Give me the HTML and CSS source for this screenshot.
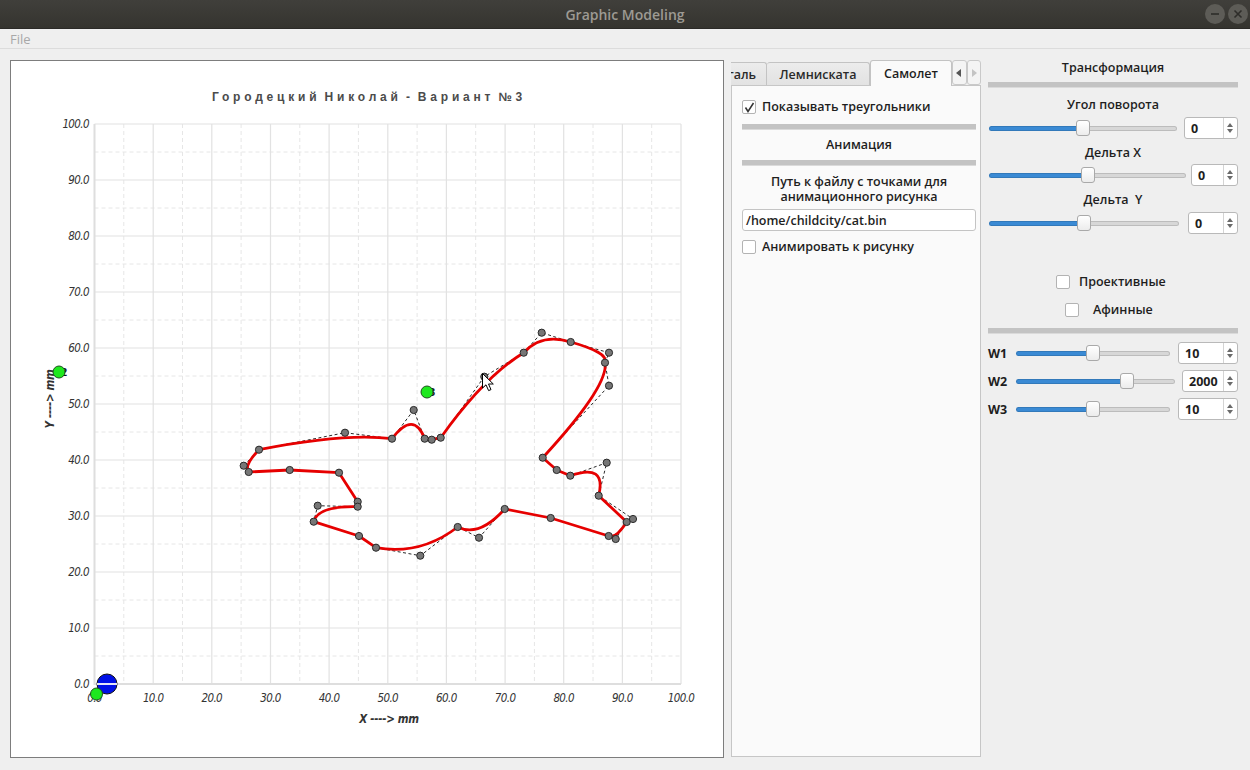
FILE: index.html
```html
<!DOCTYPE html>
<html lang="ru">
<head>
<meta charset="utf-8">
<title>Graphic Modeling</title>
<link rel="stylesheet" href="styles.css">
</head>
<body>
<div class="window">
  <header class="titlebar">
    <span></span>
    <span class="title">Graphic Modeling</span>
    <div class="wbtns">
      <span class="wbtn"><svg width="20" height="20" viewBox="0 0 20 20"><path d="M6 10H14" stroke="#2e2d2a" stroke-width="1.6"/></svg></span>
      <span class="wbtn"><svg width="20" height="20" viewBox="0 0 20 20"><path d="M6.5 6.5L13.5 13.5M13.5 6.5L6.5 13.5" stroke="#2e2d2a" stroke-width="1.6"/></svg></span>
    </div>
  </header>
  <nav class="menubar"><span class="menu-item">File</span></nav>

  <main class="main">
    <section class="chart">
      <svg class="plot" width="712" height="696" viewBox="11 61 712 696">
        <text class="ctitle" x="369" y="101" text-anchor="middle">Городецкий Николай - Вариант №3</text>
        <path class="minor" d="M123.8 124V684M182.5 124V684M241.1 124V684M299.8 124V684M358.4 124V684M417.1 124V684M475.7 124V684M534.4 124V684M593 124V684M651.7 124V684M94.5 656H681M94.5 600H681M94.5 544H681M94.5 488H681M94.5 432H681M94.5 376H681M94.5 320H681M94.5 264H681M94.5 208H681M94.5 152H681"/>
        <path class="major" d="M153.2 124V684M211.8 124V684M270.5 124V684M329.1 124V684M387.8 124V684M446.4 124V684M505.1 124V684M563.7 124V684M622.4 124V684M681 124V684M94.5 628H681M94.5 572H681M94.5 516H681M94.5 460H681M94.5 404H681M94.5 348H681M94.5 292H681M94.5 236H681M94.5 180H681M94.5 124H681"/>
        <path class="axis" d="M94.5 124V684H681"/>
        <g class="tick" text-anchor="end">
          <text x="89" y="688">0.0</text>
          <text x="89" y="632">10.0</text>
          <text x="89" y="576">20.0</text>
          <text x="89" y="520">30.0</text>
          <text x="89" y="464">40.0</text>
          <text x="89" y="408">50.0</text>
          <text x="89" y="352">60.0</text>
          <text x="89" y="296">70.0</text>
          <text x="89" y="240">80.0</text>
          <text x="89" y="184">90.0</text>
          <text x="89" y="128">100.0</text>
        </g>
        <g class="tick" text-anchor="middle">
          <text x="94.5" y="702">0.0</text>
          <text x="153.2" y="702">10.0</text>
          <text x="211.8" y="702">20.0</text>
          <text x="270.5" y="702">30.0</text>
          <text x="329.1" y="702">40.0</text>
          <text x="387.8" y="702">50.0</text>
          <text x="446.4" y="702">60.0</text>
          <text x="505.1" y="702">70.0</text>
          <text x="563.7" y="702">80.0</text>
          <text x="622.4" y="702">90.0</text>
          <text x="681" y="702">100.0</text>
        </g>
        <text class="alabel" x="389" y="723" text-anchor="middle">X ----&gt; mm</text>
        <text class="alabel" x="0" y="0" text-anchor="middle" transform="translate(54 399) rotate(-90)">Y ----&gt; mm</text>

        <path class="guide" d="M392 438.7L413.7 410L424.7 438.7M392 438.7L345 432.7L259 449.7L243.7 465.7L248.7 472M357.7 506.7L317.7 505.7L313.7 521.7M376 547.7L420.3 555.7L457.7 527L479 537.7L504.7 509M608.7 536L615.7 539L626.7 522L633 519L598.7 495.7L606.7 462.7L570.3 475.7M542.7 457.7L609 385.7L605 362.7L609 352.7L570.7 342L541.7 332.7L523.7 352.7L484.3 376.7L440.7 437.7"/>
        <path class="curve" d="M392 438.7Q345 432.7 259 449.7Q243.7 465.7 248.7 472L289.7 470L339 472.7L357.7 501.7L357.7 506.7Q317.7 505.7 313.7 521.7L359 536L376 547.7Q420.3 555.7 457.7 527Q479 537.7 504.7 509L550.7 518L608.7 536Q615.7 539 626.7 522L598.7 495.7Q606.7 462.7 570.3 475.7L556.7 470L542.7 457.7Q609 385.7 605 362.7Q609 352.7 570.7 342Q541.7 332.7 523.7 352.7Q484.3 376.7 440.7 437.7L431.7 439.7L424.7 438.7Q413.7 410 392 438.7Z"/>
        <g class="dot">
          <circle cx="541.7" cy="332.7" r="3.6"/><circle cx="570.7" cy="342" r="3.6"/><circle cx="609" cy="352.7" r="3.6"/>
          <circle cx="605" cy="362.7" r="3.6"/><circle cx="609" cy="385.7" r="3.6"/><circle cx="523.7" cy="352.7" r="3.6"/>
          <circle cx="484.3" cy="376.7" r="3.6"/><circle cx="413.7" cy="410" r="3.6"/><circle cx="392" cy="438.7" r="3.6"/>
          <circle cx="424.7" cy="438.7" r="3.6"/><circle cx="431.7" cy="439.7" r="3.6"/><circle cx="440.7" cy="437.7" r="3.6"/>
          <circle cx="345" cy="432.7" r="3.6"/><circle cx="259" cy="449.7" r="3.6"/><circle cx="243.7" cy="465.7" r="3.6"/>
          <circle cx="248.7" cy="472" r="3.6"/><circle cx="289.7" cy="470" r="3.6"/><circle cx="339" cy="472.7" r="3.6"/>
          <circle cx="357.7" cy="501.7" r="3.6"/><circle cx="357.7" cy="506.7" r="3.6"/><circle cx="317.7" cy="505.7" r="3.6"/>
          <circle cx="313.7" cy="521.7" r="3.6"/><circle cx="359" cy="536" r="3.6"/><circle cx="376" cy="547.7" r="3.6"/>
          <circle cx="420.3" cy="555.7" r="3.6"/><circle cx="457.7" cy="527" r="3.6"/><circle cx="479" cy="537.7" r="3.6"/>
          <circle cx="504.7" cy="509" r="3.6"/><circle cx="550.7" cy="518" r="3.6"/><circle cx="608.7" cy="536" r="3.6"/>
          <circle cx="615.7" cy="539" r="3.6"/><circle cx="626.7" cy="522" r="3.6"/><circle cx="633" cy="519" r="3.6"/>
          <circle cx="598.7" cy="495.7" r="3.6"/><circle cx="606.7" cy="462.7" r="3.6"/><circle cx="570.3" cy="475.7" r="3.6"/>
          <circle cx="556.7" cy="470" r="3.6"/><circle cx="542.7" cy="457.7" r="3.6"/>
        </g>
        <circle class="blue" cx="107" cy="684" r="10"/>
        <path class="axis-over" d="M97 684H117"/>
        <circle class="green" cx="96.5" cy="694" r="6"/>
        <text class="plabel" x="61" y="376">2</text>
        <circle class="green" cx="59" cy="372" r="6"/>
        <text class="plabel" x="429" y="396">3</text>
        <circle class="green" cx="427" cy="392" r="6"/>
        <path class="cursor" d="M482.5 373.5V388L486 384.8L488.6 390.6L491 389.6L488.5 384H493.3Z"/>
      </svg>
    </section>

    <section class="tabs">
      <div class="tabbar">
        <div class="tab tab-cut"><span>галь</span></div>
        <div class="tab tab-lem">Лемниската</div>
        <div class="tab tab-active">Самолет</div>
        <div class="scroll">
          <span class="sbtn"><svg width="6" height="8" viewBox="0 0 6 8"><path d="M5 0V8L0 4Z" fill="#555"/></svg></span>
          <span class="sbtn"><svg width="6" height="8" viewBox="0 0 6 8"><path d="M1 0V8L6 4Z" fill="#c4c4c4"/></svg></span>
        </div>
      </div>
      <div class="tabpage">
        <label class="check-row first">
          <span class="cbox"><svg width="11" height="11" viewBox="0 0 11 11"><path d="M1.5 5.5L4 9.5L9.5 1" fill="none" stroke="#333" stroke-width="1.5"/></svg></span>
          <span>Показывать треугольники</span>
        </label>
        <div class="sep sep-a"></div>
        <div class="head h-anim">Анимация</div>
        <div class="sep sep-b"></div>
        <div class="head h-path">Путь к файлу с точками для<br>анимационного рисунка</div>
        <div class="input">/home/childcity/cat.bin</div>
        <label class="check-row second">
          <span class="cbox"></span>
          <span>Анимировать к рисунку</span>
        </label>
      </div>
    </section>

    <section class="side">
      <div class="head h-tr">Трансформация</div>
      <div class="sep sep-1"></div>
      <div class="head h-ugol">Угол поворота</div>
      <div class="srow r1">
        <div class="slider" style="width:188px;--p:50%"><div class="groove"></div><div class="handle"></div></div>
        <div class="spin" style="width:54px"><span class="val">0</span><span class="arr"></span></div>
      </div>
      <div class="head h-dx">Дельта X</div>
      <div class="srow r2">
        <div class="slider" style="width:197px;--p:50%"><div class="groove"></div><div class="handle"></div></div>
        <div class="spin" style="width:47px"><span class="val">0</span><span class="arr"></span></div>
      </div>
      <div class="head h-dy">Дельта&nbsp; Y</div>
      <div class="srow r3">
        <div class="slider" style="width:190px;--p:50%"><div class="groove"></div><div class="handle"></div></div>
        <div class="spin" style="width:50px"><span class="val">0</span><span class="arr"></span></div>
      </div>
      <label class="check-row c-proj"><span class="cbox"></span><span class="ctext">Проективные</span></label>
      <label class="check-row c-af"><span class="cbox"></span><span class="ctext">Афинные</span></label>
      <div class="sep sep-2"></div>
      <div class="wrow w1">
        <span class="wl">W1</span>
        <div class="slider" style="width:154px;--p:50%"><div class="groove"></div><div class="handle"></div></div>
        <div class="spin" style="width:60px"><span class="val">10</span><span class="arr"></span></div>
      </div>
      <div class="wrow w2">
        <span class="wl">W2</span>
        <div class="slider" style="width:159px;--p:70%"><div class="groove"></div><div class="handle"></div></div>
        <div class="spin" style="width:56px"><span class="val">2000</span><span class="arr"></span></div>
      </div>
      <div class="wrow w3">
        <span class="wl">W3</span>
        <div class="slider" style="width:154px;--p:50%"><div class="groove"></div><div class="handle"></div></div>
        <div class="spin" style="width:60px"><span class="val">10</span><span class="arr"></span></div>
      </div>
    </section>
  </main>
</div>
</body>
</html>
```

FILE: styles.css
```css
* { box-sizing: border-box; }
html, body { margin: 0; padding: 0; }
body {
  width: 1250px; height: 770px; overflow: hidden;
  background: #efefef;
  font-family: "Open Sans", "Noto Sans", "DejaVu Sans", sans-serif;
  color: #1e1e1e;
}
.window { width: 1250px; height: 770px; display: flex; flex-direction: column; }

.titlebar {
  height: 29px; flex: none;
  display: grid; grid-template-columns: 1fr auto 1fr; align-items: center;
  background: linear-gradient(#403f3b, #35342f);
  border-bottom: 1px solid #2b2a27;
}
.title { font-size: 14px; font-weight: 600; color: #9d9a93; letter-spacing: 0; }
.wbtns { justify-self: end; display: flex; gap: 3px; padding-right: 2px; }
.wbtn { width: 20px; height: 20px; border-radius: 50%; background: #5d5c57; display: block; }
.wbtn svg { display: block; }

.menubar {
  height: 20px; flex: none; display: flex; align-items: center;
  padding-left: 10px; border-bottom: 1px solid #dcdcdc; background: #efefef;
}
.menu-item { font-size: 13px; color: #a8a8a8; }

.main { flex: 1; display: flex; align-items: flex-start; padding-top: 11px; }

.chart {
  margin-left: 10px; width: 714px; height: 698px; flex: none;
  background: #fff; border: 1px solid #7d7d7d;
}
.plot { display: block; }
.ctitle { font: bold 12px "Liberation Sans", "DejaVu Sans", sans-serif; fill: #4b4b4b; letter-spacing: 3.8px; word-spacing: -3px; }
.minor { stroke: #e6e6e6; stroke-width: 1; stroke-dasharray: 4 3; fill: none; }
.major { stroke: #e2e2e2; stroke-width: 1.2; fill: none; }
.axis { stroke: #dedede; stroke-width: 2; fill: none; }
.axis-over { stroke: #e4e4f8; stroke-width: 2; }
.tick { font: italic 11.5px "DejaVu Sans Condensed", "Liberation Sans", sans-serif; fill: #333; letter-spacing: -0.6px; }
.alabel { font: italic bold 11.5px "DejaVu Sans Condensed", "Liberation Sans", sans-serif; fill: #333; letter-spacing: -0.3px; }
.guide { fill: none; stroke: #111; stroke-width: 0.9; stroke-dasharray: 3 2.5; }
.curve { fill: none; stroke: #e60000; stroke-width: 2.8; stroke-linejoin: round; }
.dot circle { fill: #767676; stroke: #2a2a2a; stroke-width: 1; }
.blue { fill: #0010e6; stroke: #111; stroke-width: 1; }
.green { fill: #1ee81e; stroke: #1f4f1f; stroke-width: 1; }
.plabel { font: bold 11px "Liberation Sans", sans-serif; fill: #111; }
.cursor { fill: #fff; stroke: #000; stroke-width: 1; stroke-linejoin: round; }

/* tabs */
.tabs { margin-left: 7px; width: 250px; flex: none; display: flex; flex-direction: column; }
.tabbar { height: 25px; display: flex; align-items: flex-end; position: relative; z-index: 1; }
.tab {
  height: 23px; display: flex; align-items: center; justify-content: center;
  font-size: 12.5px; font-weight: 600; color: #2a2a2a;
  background: linear-gradient(#ececec, #e2e2e2);
  border: 1px solid #c3c3c3; border-bottom: none; border-radius: 3px 3px 0 0;
}
.tab-cut { width: 36px; overflow: hidden; justify-content: flex-start; border-left: none; border-radius: 0 3px 0 0; }
.tab-cut span { margin-left: -3px; }
.tab-lem { width: 103px; border-left: none; }
.tab-active {
  width: 82px; height: 26px; margin-bottom: -1px;
  background: #fafafa; border-color: #c3c3c3; color: #1e1e1e;
}
.scroll { display: flex; height: 25px; margin-left: 0; }
.sbtn {
  width: 14.5px; height: 25px; display: flex; align-items: center; justify-content: center;
  background: #f4f4f4; border: 1px solid #c9c9c9; border-radius: 3px;
}
.tabpage {
  height: 672px; background: #fafafa; border: 1px solid #c6c6c6;
  display: flex; flex-direction: column; padding: 0 4px 0 10px;
}
.check-row { display: flex; align-items: center; gap: 6px; font-size: 12.5px; font-weight: 600; height: 18px; line-height: 18px; flex: none; }
.cbox {
  width: 14px; height: 14px; flex: none; background: #fff;
  border: 1px solid #b3b3b3; border-radius: 2px;
  display: flex; align-items: center; justify-content: center;
}
.tabpage .check-row.first { margin-top: 12px; }
.sep { height: 6px; background: #c3c3c3; border-bottom: 1px solid #dadada; flex: none; }
.sep-a { margin-top: 8px; }
.head { font-size: 12.5px; font-weight: 600; text-align: center; flex: none; }
.h-anim { margin-top: 7px; height: 16px; line-height: 16px; }
.sep-b { margin-top: 7px; }
.h-path { margin-top: 8px; line-height: 15px; height: 30px; }
.input {
  margin-top: 5px; height: 22px; flex: none; background: #fff; border: 1px solid #c4c4c4; border-radius: 3px;
  font-size: 12.5px; font-weight: 600; display: flex; align-items: center; padding-left: 3px;
}
.tabpage .check-row.second { margin-top: 7px; }

/* side panel */
.side { margin-left: 4px; width: 253px; flex: none; display: flex; flex-direction: column; padding-left: 3px; }
.side .head { height: 18px; line-height: 18px; }
.h-tr { margin-top: -1px; }
.sep-1 { margin-top: 5px; }
.h-ugol { margin-top: 8px; }
.srow { display: flex; align-items: center; justify-content: space-between; height: 22px; padding-left: 1px; flex: none; }
.r1 { margin-top: 3px; }
.h-dx { margin-top: 5px; }
.r2 { margin-top: 2px; }
.h-dy { margin-top: 5px; }
.r3 { margin-top: 3px; }
.slider { position: relative; height: 18px; flex: none; }
.groove {
  position: absolute; left: 0; right: 0; top: 50%; height: 5px; margin-top: -2.5px; border-radius: 3px;
  background: linear-gradient(to right, #3a8ad4 0, #3a8ad4 var(--p), #d7d7d7 var(--p), #d7d7d7 100%);
  box-shadow: inset 0 0 0 1px rgba(0,0,0,0.12);
}
.handle {
  position: absolute; top: 1px; left: calc(var(--p) - 7px); width: 14px; height: 16px;
  background: linear-gradient(#ffffff, #ececec); border: 1px solid #a9a9a9; border-radius: 3px;
}
.spin {
  height: 22px; flex: none; display: flex; align-items: stretch;
  background: #fff; border: 1px solid #b9b9b9; border-radius: 3px;
}
.val { flex: 1; font-size: 12.5px; font-weight: 700; display: flex; align-items: center; padding-left: 6px; }
.arr { width: 14px; border-left: 1px solid #d4d4d4; position: relative; }
.arr::before, .arr::after {
  content: ""; position: absolute; left: 3px; width: 0; height: 0;
  border-left: 3.5px solid transparent; border-right: 3.5px solid transparent;
}
.arr::before { top: 5px; border-bottom: 4px solid #6a6a6a; }
.arr::after { bottom: 5px; border-top: 4px solid #6a6a6a; }
.side .check-row { justify-content: flex-start; gap: 0; }
.c-proj { margin-top: 39px; padding-left: 68px; }
.c-proj .ctext { margin-left: 9px; }
.c-af { margin-top: 10px; padding-left: 77px; }
.c-af .ctext { margin-left: 14px; }
.sep-2 { margin-top: 9px; }
.wrow { display: flex; align-items: center; height: 22px; flex: none; }
.w1 { margin-top: 8px; }
.w2, .w3 { margin-top: 6px; }
.wl { width: 28px; font-size: 12.5px; font-weight: 700; flex: none; }
.wrow .slider { margin-right: auto; }
```
